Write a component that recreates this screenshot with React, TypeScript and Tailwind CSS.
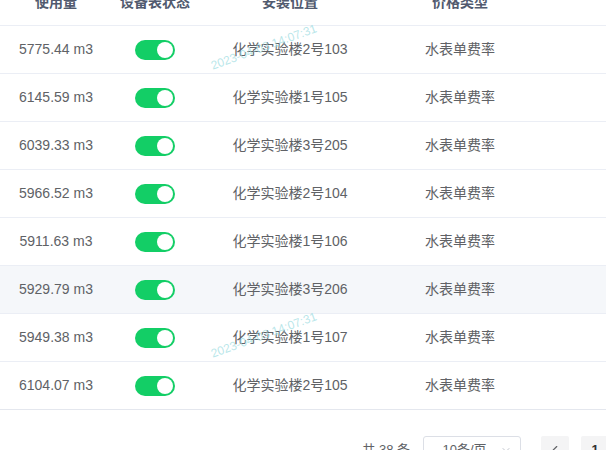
import { ChevronDown, ChevronLeft } from 'lucide-react';

// ─── Data ─────────────────────────────────────────────────────────────────────
const ROWS = [
  { usage: '5775.44 m3', place: '化学实验楼2号103', price: '水表单费率' },
  { usage: '6145.59 m3', place: '化学实验楼1号105', price: '水表单费率' },
  { usage: '6039.33 m3', place: '化学实验楼3号205', price: '水表单费率' },
  { usage: '5966.52 m3', place: '化学实验楼2号104', price: '水表单费率' },
  { usage: '5911.63 m3', place: '化学实验楼1号106', price: '水表单费率' },
  { usage: '5929.79 m3', place: '化学实验楼3号206', price: '水表单费率', hover: true },
  { usage: '5949.38 m3', place: '化学实验楼1号107', price: '水表单费率' },
  { usage: '6104.07 m3', place: '化学实验楼2号105', price: '水表单费率' },
];

const FONT = '[font-family:"Liberation_Sans","Noto_Sans_CJK_SC",sans-serif]';

function Switch() {
  return (
    <div className="w-10 h-5 rounded-full bg-[#13ce66] flex items-center justify-end px-[2px]">
      <div className="w-4 h-4 rounded-full bg-white" />
    </div>
  );
}

function Watermark({ top, left }: { top: number; left: number }) {
  return (
    <div
      className="absolute pointer-events-none text-[12px] text-[#9adbe0]/70 -rotate-[20deg] whitespace-nowrap"
      style={{ top, left }}
    >
      2023-04-03 14:07:31
    </div>
  );
}

export default function App() {
  return (
    <div className={`relative w-[606px] h-[450px] overflow-hidden bg-white ${FONT}`}>
      <div className="-mt-[21px]">
        {/* ── Header ── */}
        <div className="flex h-[47px] items-center border-b border-[#ebeef5] text-[14px] font-bold text-[#515a6e]">
          <div className="w-[112px] text-center">使用量</div>
          <div className="w-[86px] text-center">设备表状态</div>
          <div className="w-[184px] text-center">安装位置</div>
          <div className="w-[156px] text-center">价格类型</div>
        </div>

        {/* ── Body ── */}
        {ROWS.map((r, i) => (
          <div
            key={i}
            className={`flex h-[48px] items-center border-b text-[14px] text-[#606266] ${
              i === ROWS.length - 1 ? 'border-[#e4e7ee]' : 'border-[#ebeef5]'
            } ${r.hover ? 'bg-[#f5f7fa]' : ''}`}
          >
            <div className="w-[112px] text-center">{r.usage}</div>
            <div className="w-[86px] flex justify-center">
              <Switch />
            </div>
            <div className="w-[184px] text-center">{r.place}</div>
            <div className="w-[156px] text-center">{r.price}</div>
          </div>
        ))}

        {/* ── Pagination ── */}
        <div className="flex items-center justify-end pt-[26px] text-[13px] text-[#606266]">
          <span className="mr-[13px] whitespace-nowrap">共 38 条</span>
          <div className="w-[98px] h-[28px] border border-[#dcdfe6] rounded-[3px] flex items-center pl-[15px] pr-[8px] mr-[20px]">
            <span className="flex-1 text-center pr-[10px]">10条/页</span>
            <ChevronDown size={12} className="text-[#c0c4cc]" />
          </div>
          <div className="w-[28px] h-[28px] rounded-[2px] bg-[#f4f4f5] flex items-center justify-center mr-[12px]">
            <ChevronLeft size={14} className="text-[#606266]" />
          </div>
          <div className="w-[28px] h-[28px] rounded-[2px] bg-[#f4f4f5] flex items-center justify-center font-bold text-[#303133] -mr-[3px] shrink-0">
            1
          </div>
        </div>
      </div>

      <Watermark top={38} left={208} />
      <Watermark top={326} left={208} />
    </div>
  );
}
